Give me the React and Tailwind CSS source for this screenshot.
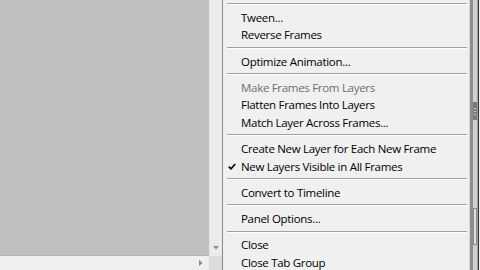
import React from "react";

function Sep() {
  return (
    <div className="h-[8.75px] pt-[3px] pl-[4px] pr-[2px] shrink-0">
      <div className="h-[2px] border-t border-b border-t-[#a0a0a0] border-b-[#ffffff]" />
    </div>
  );
}

function Item({ children, disabled, checked }) {
  return (
    <div
      className={
        "relative h-[17.5px] leading-[17px] pl-[18px] whitespace-nowrap shrink-0 " +
        (disabled ? "text-[#6d6d6d]" : "text-black")
      }
    >
      {checked && (
        <svg
          className="absolute left-[5px] top-[5px]"
          width="8"
          height="7"
          viewBox="0 0 8 7"
        >
          <path d="M0.8 3.6 L3 5.8 L7.2 1" fill="none" stroke="#000" strokeWidth="1.7" />
        </svg>
      )}
      {children}
    </div>
  );
}

export default function App() {
  return (
    <div
      className="flex h-[270px] w-[480px] overflow-hidden bg-[#f0f0f0] text-[11.5px] tracking-[-0.3px]"
      style={{ fontFamily: '"Open Sans", "Noto Sans", sans-serif' }}
    >
      {/* left panel */}
      <div className="flex flex-col w-[222px] shrink-0">
        <div className="flex flex-1">
          <div className="w-[209px] bg-[#c0c0c0] border-b border-[#b4b4b4]" />
          <div className="w-[1px] bg-[#e4e4e4]" />
          <div className="w-[12px] bg-[#ececec] flex flex-col justify-end items-center pb-[6px]">
            <svg width="6" height="4" viewBox="0 0 6 4">
              <path d="M0 0 H6 L3 3.5 Z" fill="#8a8a8a" />
            </svg>
          </div>
        </div>
        <div className="flex h-[14px]">
          <div className="w-[209px] bg-[#efefef] flex justify-end items-center pr-[6px]">
            <svg width="4" height="6" viewBox="0 0 4 6">
              <path d="M0 0 V6 L3.5 3 Z" fill="#8a8a8a" />
            </svg>
          </div>
          <div className="w-[13px] bg-[#dcdcdc]" />
        </div>
      </div>

      {/* menu */}
      <div className="w-[1px] bg-[#8a8a8a] shrink-0" />
      <div className="w-[246px] shrink-0 flex flex-col bg-[#f0f0f0]">
        <Sep />
        <Item>Tween...</Item>
        <Item>Reverse Frames</Item>
        <Sep />
        <Item>Optimize Animation...</Item>
        <Sep />
        <Item disabled>Make Frames From Layers</Item>
        <Item>Flatten Frames Into Layers</Item>
        <Item>Match Layer Across Frames...</Item>
        <Sep />
        <Item>Create New Layer for Each New Frame</Item>
        <Item checked>New Layers Visible in All Frames</Item>
        <Sep />
        <Item>Convert to Timeline</Item>
        <Sep />
        <Item>Panel Options...</Item>
        <Sep />
        <Item>Close</Item>
        <Item>Close Tab Group</Item>
      </div>

      {/* right scrollbar strip behind menu */}
      <div className="flex w-[11px] shrink-0">
        <div className="w-[1px] bg-[#d8d8d8]" />
        <div className="w-[3px] bg-[#8e8e8e]" />
        <div className="w-[4px] bg-[#cfcfcf] flex flex-col">
          <div className="h-[102px]" />
          <div className="h-[18px] bg-[#7a7a7a] flex flex-col justify-center gap-[2px] px-[1px]">
            <div className="h-[1px] bg-[#d0d0d0]" />
            <div className="h-[1px] bg-[#d0d0d0]" />
            <div className="h-[1px] bg-[#d0d0d0]" />
          </div>
          <div className="h-[88px]" />
          <div className="h-[37px] border border-[#8a8a8a] bg-[#e0e0e0]" />
        </div>
        <div className="w-[1px] bg-[#a0a0a0]" />
        <div className="w-[1px] bg-[#333333]" />
        <div className="w-[1px] bg-[#f0f0f0]" />
      </div>
    </div>
  );
}
